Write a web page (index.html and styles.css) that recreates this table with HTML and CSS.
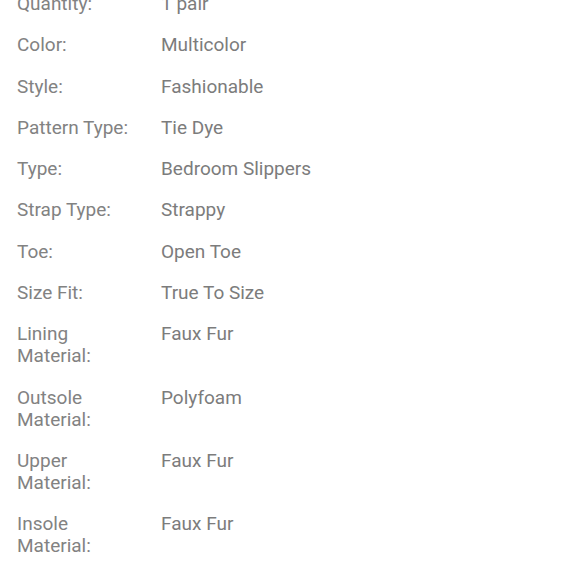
FILE: index.html
```html
<!DOCTYPE html>
<html>
<head>
<meta charset="utf-8">
<link rel="stylesheet" href="styles.css">
</head>
<body>
<dl class="specs">
  <div class="row"><dt>Quantity:</dt><dd>1 pair</dd></div>
  <div class="row"><dt>Color:</dt><dd>Multicolor</dd></div>
  <div class="row"><dt>Style:</dt><dd>Fashionable</dd></div>
  <div class="row"><dt>Pattern Type:</dt><dd>Tie Dye</dd></div>
  <div class="row"><dt>Type:</dt><dd>Bedroom Slippers</dd></div>
  <div class="row"><dt>Strap Type:</dt><dd>Strappy</dd></div>
  <div class="row"><dt>Toe:</dt><dd>Open Toe</dd></div>
  <div class="row"><dt>Size Fit:</dt><dd>True To Size</dd></div>
  <div class="row"><dt>Lining Material:</dt><dd>Faux Fur</dd></div>
  <div class="row"><dt>Outsole Material:</dt><dd>Polyfoam</dd></div>
  <div class="row"><dt>Upper Material:</dt><dd>Faux Fur</dd></div>
  <div class="row"><dt>Insole Material:</dt><dd>Faux Fur</dd></div>
</dl>
</body>
</html>
```

FILE: styles.css
```css
html, body {
  margin: 0;
  padding: 0;
  background: #ffffff;
}
body {
  font-family: Roboto, "Liberation Sans", sans-serif;
  font-size: 19px;
  line-height: 22px;
  color: #7d7d7d;
  overflow: hidden;
}
.specs {
  margin: -7px 0 0 0;
  padding: 0 0 0 17px;
  display: flex;
  flex-direction: column;
  gap: 19.3px;
}
.row {
  display: grid;
  grid-template-columns: 120px 1fr;
  column-gap: 24px;
}
.row dt {
  margin: 0;
  color: #828282;
}
.row dd {
  margin: 0;
  color: #7c7c7c;
}
```
